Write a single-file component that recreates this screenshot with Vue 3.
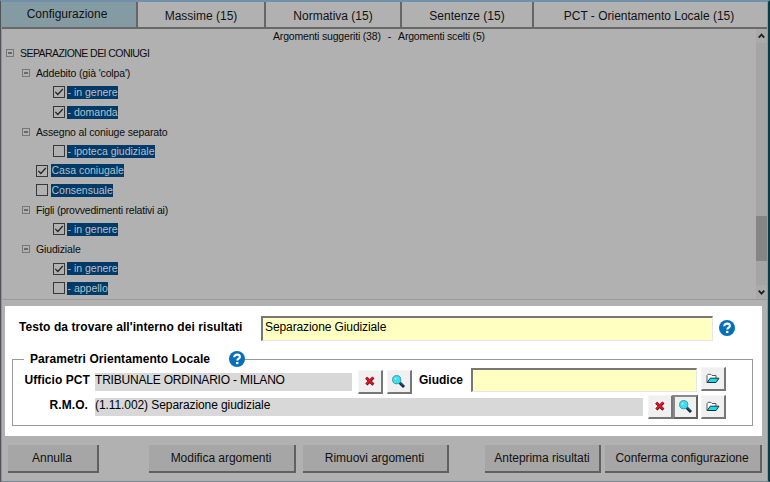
<script setup>
import { h } from 'vue'

const tabs = ['Configurazione', 'Massime (15)', 'Normativa (15)', 'Sentenze (15)', 'PCT - Orientamento Locale (15)']

const rows = [
  { text: 'SEPARAZIONE DEI CONIUGI', kind: 'root' },
  { text: "Addebito (già 'colpa')", kind: 'group' },
  { text: '- in genere', kind: 'leaf', checked: true },
  { text: '- domanda', kind: 'leaf', checked: true },
  { text: 'Assegno al coniuge separato', kind: 'group' },
  { text: '- ipoteca giudiziale', kind: 'leaf' },
  { text: 'Casa coniugale', kind: 'item', checked: true },
  { text: 'Consensuale', kind: 'item' },
  { text: 'Figli (provvedimenti relativi ai)', kind: 'group narrow' },
  { text: '- in genere', kind: 'leaf', checked: true },
  { text: 'Giudiziale', kind: 'group' },
  { text: '- in genere', kind: 'leaf', checked: true },
  { text: '- appello', kind: 'leaf' }
]

const Help = () => h('svg', { class: 'help', viewBox: '0 0 16 16' }, [
  h('circle', { cx: 8, cy: 8, r: 8, fill: '#0570b8' }),
  h('path', { d: 'M5.2 6.2C5.2 4.5 6.4 3.6 8.1 3.6s2.8 1 2.8 2.3c0 1.7-2.6 1.8-2.6 3.6', fill: 'none', stroke: '#fff', 'stroke-width': 2.1 }),
  h('rect', { x: 7.1, y: 10.9, width: 2.3, height: 2.2, fill: '#fff' })
])

const Cross = () => h('svg', { width: 10, height: 10, viewBox: '0 0 10 10' }, [
  h('path', { d: 'M1.2 1.7 8.4 8.6M8.4 1.4 1.4 8.6', stroke: '#4a0a12', 'stroke-width': 2.9 }),
  h('path', { d: 'M1.2 1.5 8.2 8.1M8.2 1.4 1.4 8.2', stroke: '#e01828', 'stroke-width': 1.9 })
])

const Lens = () => h('svg', { width: 13, height: 13, viewBox: '0 0 13 13' }, [
  h('path', { d: 'M7.5 7.5 12 12', stroke: '#0a1c38', 'stroke-width': 2.8 }),
  h('path', { d: 'M8 7.6 11.5 11', stroke: '#2f6fa8', 'stroke-width': 1 }),
  h('circle', { cx: 4.7, cy: 4.7, r: 4.1, fill: '#35e3ee', stroke: '#4a93a6', 'stroke-width': 1 }),
  h('path', { d: 'M2.8 4.3 4.3 2.8', stroke: '#d8ffff', 'stroke-width': 1.2 })
])

const Folder = () => h('svg', { width: 14, height: 11, viewBox: '0 0 14 11' }, [
  h('path', { d: 'M1 9.5V2.5L2 1.3H4.8L6 2.5H10V5', fill: '#fff', stroke: '#555b5e', 'stroke-width': 1 }),
  h('path', { d: 'M1.2 9.5 4.2 5.2H13L10 9.5Z', fill: '#16dbea', stroke: '#15333a', 'stroke-width': 1 })
])
</script>

<template>
  <div class="window">
    <nav class="tabs">
      <div v-for="(t, i) in tabs" :key="t" class="tab" :class="{ active: i === 0 }">{{ t }}</div>
    </nav>

    <section class="topics">
      <div class="list">
        <div class="summary"><span>Argomenti suggeriti (38)</span><span>-</span><span>Argomenti scelti (5)</span></div>
        <div v-for="(r, i) in rows" :key="i" class="row" :class="r.kind">
          <template v-if="r.kind === 'leaf' || r.kind === 'item'">
            <svg class="check" viewBox="0 0 12 12">
              <rect x=".5" y=".5" width="11" height="11" fill="none" stroke="#383838" />
              <path v-if="r.checked" d="M2.3 5.8 4.8 8.5 9.8 3" fill="none" stroke="#222" stroke-width="1.2" />
            </svg>
            <span class="label picked">{{ r.text }}</span>
          </template>
          <template v-else>
            <svg class="toggle" viewBox="0 0 8 8">
              <rect x=".5" y=".5" width="7" height="7" fill="none" stroke="#777" />
              <path d="M2 4H6" stroke="#222" />
            </svg>
            <span class="label">{{ r.text }}</span>
          </template>
        </div>
      </div>
      <div class="scrollbar">
        <svg viewBox="0 0 10 10"><path d="M2.5 6.5 5 3.8 7.5 6.5" /></svg>
        <div class="track"><div class="thumb"></div></div>
        <svg viewBox="0 0 10 10"><path d="M2.5 3.8 5 6.5 7.5 3.8" /></svg>
      </div>
    </section>

    <main class="panel">
      <div class="search">
        <b class="search-label">Testo da trovare all'interno dei risultati</b>
        <div class="input text">Separazione Giudiziale</div>
        <Help />
      </div>
      <div class="frame">
        <div class="legend">
          <i class="rule lead"></i>
          <b>Parametri Orientamento Locale</b>
          <Help />
          <i class="rule rest"></i>
        </div>
        <div class="fields">
          <div class="line office">
            <b class="name">Ufficio PCT</b>
            <div class="value">TRIBUNALE ORDINARIO - MILANO</div>
            <button class="tool"><Cross /></button>
            <button class="tool"><Lens /></button>
            <b class="judge">Giudice</b>
            <div class="input"></div>
            <button class="tool"><Folder /></button>
          </div>
          <div class="line rmo">
            <b class="name">R.M.O.</b>
            <div class="value">(1.11.002) Separazione giudiziale</div>
            <button class="tool"><Cross /></button>
            <button class="tool focus"><Lens /></button>
            <button class="tool"><Folder /></button>
          </div>
        </div>
      </div>
    </main>

    <footer class="actions">
      <button class="action">Annulla</button>
      <button class="action modify">Modifica argomenti</button>
      <button class="action remove">Rimuovi argomenti</button>
      <button class="action preview">Anteprima risultati</button>
      <button class="action confirm">Conferma configurazione</button>
    </footer>
  </div>
</template>

<style>
body { margin: 0; overflow: hidden; }
</style>

<style scoped>
* { box-sizing: border-box; }
.window {
  width: 770px;
  height: 482px;
  display: flex;
  flex-direction: column;
  background: #b1b1b1;
  border-left: 1px solid #505357;
  border-right: 2px solid #083c49;
  border-top: 2px solid #7090ac;
  border-bottom: 1px solid #718795;
  box-shadow: inset 1px 0 #8798a5, inset -1px 0 #8b9da4;
  font: 12px/14px "Liberation Sans", Arial, sans-serif;
  color: #000;
  white-space: nowrap;
}
.tabs {
  height: 27px;
  flex: none;
  margin: 0 1px;
  display: grid;
  grid-template-columns: 136px 128px 136px 132px 1fr;
  border-bottom: 2px solid #696969;
  color: #111;
}
.tab {
  display: flex;
  align-items: center;
  justify-content: center;
  padding-top: 2px;
  border-right: 2px solid #666;
}
.tab:last-child { border-right: 0; padding-right: 3px; }
.tab.active { background: #859ba3; padding: 0 4px 1px 0; }

.topics {
  height: 271px;
  flex: none;
  margin: 0 1px;
  display: flex;
  border-bottom: 1px solid #9b9b9b;
}
.list { flex: 1; color: #0c0c0c; font-size: 10.5px; }
.summary {
  height: 14.5px;
  line-height: 14px;
  display: flex;
  gap: 7px;
  padding-left: 271px;
  letter-spacing: -.18px;
}
.row {
  height: 19.58px;
  display: flex;
  align-items: center;
}
.root { padding-left: 4px; gap: 6px; letter-spacing: -.56px; }
.group { padding-left: 20px; gap: 6px; letter-spacing: -.15px; }
.narrow { letter-spacing: -.21px; }
.item { padding-left: 34px; gap: 3px; }
.leaf { padding-left: 51px; gap: 2px; }
.check { width: 12px; height: 12px; flex: none; }
.toggle { width: 8px; height: 8px; flex: none; }
.picked {
  background: #003a68;
  color: #b5c0c8;
  height: 13px;
  line-height: 13px;
  padding: 0 .5px;
}
.scrollbar {
  width: 11px;
  display: flex;
  flex-direction: column;
  background: #a5a5a5;
}
.scrollbar svg { width: 11px; height: 14px; flex: none; background: #aaa; }
.scrollbar path { fill: none; stroke: #222; stroke-width: 1.7; }
.track { flex: 1; padding-top: 173px; }
.thumb { height: 45px; background: #858585; }

.panel {
  width: 757px;
  height: 130px;
  flex: none;
  margin: 6px 0 0 4px;
  padding: 10px 0 0 7px;
  background: #fff;
}
.help { width: 16px; height: 16px; flex: none; }
.search { display: flex; align-items: center; height: 25px; }
.search-label { width: 249px; padding: 0 0 3px 7px; letter-spacing: .08px; }
.input {
  background: #ffffc1;
  border: 1px solid #e6e6e6;
  border-top: 2px solid #777;
  border-left: 2px solid #777;
}
.text { width: 452px; height: 25px; padding: 2px 0 0 2px; letter-spacing: -.1px; }
.search .help { margin: -1px 0 0 6px; }
.frame { width: 741px; margin-top: 10px; }
.legend { height: 16px; display: flex; align-items: center; }
.rule { height: 1px; background: #999; }
.lead { width: 12px; }
.legend b { width: 198px; padding-left: 6px; letter-spacing: .07px; }
.legend .help { margin-left: 7px; }
.rest { flex: 1; }
.fields {
  height: 67px;
  margin-top: -8px;
  padding-top: 9px;
  border: solid #999;
  border-width: 0 1px 1px;
}
.line { display: flex; align-items: flex-start; }
.office { height: 27px; }
.name { width: 82px; padding: 5px 5px 0 0; text-align: right; letter-spacing: .07px; }
.value {
  height: 18px;
  line-height: 14px;
  background: #d8d8d8;
}
.office .value { width: 257px; margin: 5px 6px 0 0; letter-spacing: -.2px; }
.office .tool { margin-top: 2px; }
.office .tool + .tool { margin-left: 4px; }
.judge { width: 59px; padding: 5px 0 0 7px; }
.office .input { width: 226px; height: 24px; }
.office > .input + .tool { margin-left: 4px; margin-top: -1px; }
.rmo .name { padding: 3px 7px 0 0; }
.rmo .value { width: 548px; margin: 3px 5px 0 0; letter-spacing: -.08px; }
.rmo .tool:last-child { margin-left: 3px; }
.tool {
  width: 25px;
  height: 24px;
  padding: 0 1px 1px 0;
  flex: none;
  display: flex;
  align-items: center;
  justify-content: center;
  background: #f0f0f0;
  border: 1px solid #f5f5f5;
  border-right: 2px solid #777;
  border-bottom: 2px solid #777;
}
.tool.focus { border: 2px solid #777; border-color: #888 #606060 #606060 #888; }

.actions {
  flex: 1;
  display: flex;
  gap: 5px;
  padding: 9px 0 0 7px;
}
.action {
  width: 91px;
  height: 28px;
  padding: 0 1px 1px 0;
  background: #a6a6a6;
  border: solid #606060;
  border-width: 0 2px 2px 0;
  font: inherit;
  letter-spacing: -.04px;
  color: #111;
}
.modify { width: 147px; margin: 0 2px 0 45px; }
.remove { width: 146px; }
.preview { width: 116px; margin: 0 -1px 0 31px; padding-right: 0; }
.confirm { width: 157px; }
</style>
